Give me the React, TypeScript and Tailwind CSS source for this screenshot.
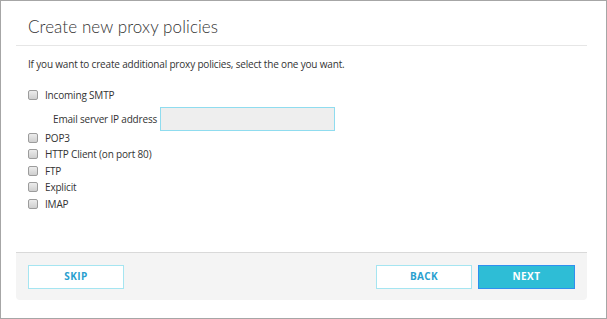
const POLICIES = ['POP3', 'HTTP Client (on port 80)', 'FTP', 'Explicit', 'IMAP'];

function Box() {
  return (
    <span className="w-[10px] h-[10px] shrink-0 rounded-[2px] border border-[#9c9c9c] bg-gradient-to-b from-[#ececec] to-[#cfcfcf]" />
  );
}

function Option({ label }: { label: string }) {
  return (
    <label className="flex items-center gap-[7px] h-[16.5px]">
      <Box />
      <span>{label}</span>
    </label>
  );
}

export default function App() {
  return (
    <div className="w-[607px] h-[319px] border border-[#a6a6a6] bg-white pl-[15px] pr-[19px] pb-[18px] flex flex-col text-[#333]"
         style={{ fontFamily: '"Open Sans", sans-serif' }}>
      <div className="flex-1 flex flex-col">
        <div className="h-[45px] border-b border-[#e6e6e6] flex items-center px-[12px] pt-[4px]">
          <h1 className="text-[17px] font-light text-[#333] tracking-[0.1px] leading-none mt-[2px]" style={{ fontFamily: 'Lato, sans-serif' }}>
            Create new proxy policies
          </h1>
        </div>
        <div className="px-[12px] pt-[13px] text-[10px] leading-none tracking-[-0.18px]">
          <p>If you want to create additional proxy policies, select the one you want.</p>
          <div className="mt-[18px] flex flex-col">
            <Option label="Incoming SMTP" />
            <div className="flex items-center h-[24px] pl-[25px] mt-[3px] -mb-[1px] gap-[3px]">
              <span>Email server IP address</span>
              <input className="w-[175px] h-[24px] bg-[#eeeeee] border border-[#8fdcef] outline-none" />
            </div>
            {POLICIES.map((p) => (
              <Option key={p} label={p} />
            ))}
          </div>
        </div>
      </div>
      <div className="h-[48px] border-t border-[#d9d9d9] bg-[#f4f4f4] rounded-b-[4px] flex items-center justify-between px-[12px] text-[10px] font-bold tracking-[0.4px]">
        <button className="w-[96px] h-[24px] bg-white border border-[#a5e5f1] text-[#2a9fcf]">SKIP</button>
        <div className="flex gap-[6px]">
          <button className="w-[96px] h-[24px] bg-white border border-[#a5e5f1] text-[#2a9fcf]">BACK</button>
          <button className="w-[97px] h-[24px] bg-[#2ebdd6] border border-[#2f8ff0] text-white">NEXT</button>
        </div>
      </div>
    </div>
  );
}
